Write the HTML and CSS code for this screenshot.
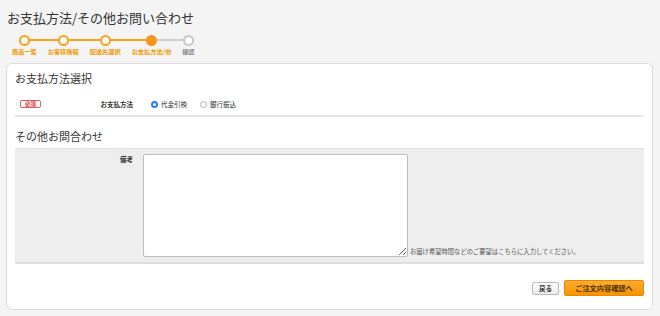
FILE: index.html
```html
<!DOCTYPE html>
<html lang="ja">
<head>
    <meta charset="UTF-8">
    <title>お支払方法/その他お問い合わせ</title>
    <link rel="stylesheet" href="styles.css">
</head>
<body>
    <div class="page">
        <h1 class="page-title">お支払方法/その他お問い合わせ</h1>

        <!-- order flow -->
        <ol class="steps">
            <li class="track"></li>
            <li class="step done"><span class="dot"></span><span class="step-name">商品一覧</span></li>
            <li class="step done"><span class="dot"></span><span class="step-name">お客様情報</span></li>
            <li class="step done"><span class="dot"></span><span class="step-name">配送先選択</span></li>
            <li class="step current"><span class="dot"></span><span class="step-name">お支払方法/他</span></li>
            <li class="step"><span class="dot"></span><span class="step-name">確認</span></li>
        </ol>

        <form class="panel">
            <h2 class="section-title">お支払方法選択</h2>
            <div class="form-row">
                <div class="row-label">
                    <span class="required">必須</span>
                    <span class="label-text">お支払方法</span>
                </div>
                <div class="row-value">
                    <label class="radio"><input type="radio" name="payment" checked> 代金引換</label>
                    <label class="radio"><input type="radio" name="payment"> 銀行振込</label>
                </div>
            </div>

            <h2 class="section-title second">その他お問合わせ</h2>
            <div class="form-row gray">
                <div class="row-label">
                    <span class="label-text">備考</span>
                </div>
                <div class="row-value">
                    <textarea class="note" name="note"></textarea>
                    <span class="help">お届け希望時間などのご要望はこちらに入力してください。</span>
                </div>
            </div>

            <div class="actions">
                <button type="button" class="btn-back">戻る</button>
                <button type="submit" class="btn-next">ご注文内容確認へ</button>
            </div>
        </form>
    </div>
</body>
</html>
```

FILE: styles.css
```css
body {
    margin: 0;
    background-color: #f4f4f4;
    color: #333;
    font-family: "Noto Sans CJK JP", "Noto Sans", sans-serif;
}
.page {
    padding: 0 7px 0 6px;
}
.page-title {
    margin: 0;
    padding: 8px 0 0 1px;
    font-size: 13px;
    line-height: 19px;
    font-weight: normal;
    color: #333;
}

/* steps */
.steps {
    position: relative;
    display: flex;
    gap: 11px;
    list-style: none;
    margin: 8px 0 0;
    padding: 0 0 0 6px;
}
.track {
    position: absolute;
    left: 19px;
    top: 4px;
    width: 169px;
    height: 2px;
    background: linear-gradient(to right, #f7a21b 131px, #cfcfcf 131px);
}
.step {
    position: relative;
    display: flex;
    flex-direction: column;
    align-items: center;
}
.dot {
    width: 7px;
    height: 7px;
    border: 2px solid #f7a21b;
    border-radius: 50%;
    background-color: #fff;
}
.step.current .dot {
    background-color: #f7941d;
    border-color: #f7941d;
}
.step:last-child .dot {
    border-color: #c8c8c8;
}
.step-name {
    margin-top: 2px;
    font-size: 6.2px;
    line-height: 8px;
    font-weight: bold;
    color: #f39800;
    white-space: nowrap;
}
.step:last-child .step-name {
    color: #888;
}

/* panel */
.panel {
    margin-top: 7px;
    background-color: #fff;
    border: 1px solid #dcdcdc;
    border-radius: 6px;
    padding: 0 8px;
}
.section-title {
    margin: 0;
    padding-top: 6px;
    font-size: 11px;
    line-height: 16px;
    font-weight: normal;
    color: #333;
}
.section-title.second {
    margin-top: 11px;
    padding: 0 0 4px;
    border-bottom: 1px solid #e2e2e2;
}
.form-row {
    display: flex;
    padding: 13px 0 6px;
    border-bottom: 2px solid #e6e6e6;
}
.row-label {
    display: flex;
    align-items: center;
    width: 122px;
    flex-shrink: 0;
}
.required {
    margin-left: 5px;
    padding: 0 4px;
    border: 1px solid #f0595b;
    border-radius: 2px;
    font-size: 5.5px;
    line-height: 6px;
    color: #e0393e;
    font-weight: bold;
}
.label-text {
    margin-left: auto;
    padding-right: 4px;
    font-size: 6.5px;
    line-height: 8px;
    font-weight: bold;
    color: #333;
}
.row-value {
    display: flex;
    align-items: center;
    padding-left: 6px;
}
.radio {
    display: flex;
    align-items: center;
    gap: 3px;
    margin-left: 8px;
    margin-right: 5px;
    font-size: 6.5px;
    color: #333;
}
.radio input {
    appearance: none;
    margin: 0;
    width: 7px;
    height: 7px;
    border: 1px solid #b5b5b5;
    border-radius: 50%;
    background-color: #fff;
}
.radio input:checked {
    background-color: #fff;
    border: 2px solid #2c7df3;
}

/* notes */
.form-row.gray {
    padding: 5px 0 5px;
    background-color: #eeeeee;
    border-bottom-color: #dedede;
}
.form-row.gray .row-label {
    align-items: flex-start;
}
.form-row.gray .label-text {
    padding-top: 1px;
}
.form-row.gray .row-value {
    align-items: flex-end;
}
.note {
    box-sizing: border-box;
    width: 265px;
    height: 103px;
    margin: 0;
    border: 1px solid #bdbdbd;
    border-radius: 2px;
    background-color: #fff;
}
.help {
    margin-left: 2px;
    margin-bottom: 1px;
    font-size: 6.3px;
    line-height: 8px;
    color: #555;
    white-space: nowrap;
}

/* buttons */
.actions {
    display: flex;
    justify-content: flex-end;
    align-items: center;
    gap: 5px;
    padding: 16px 0 13px;
}
.btn-back {
    height: 13px;
    padding: 0 6px;
    border: 1px solid #b9b9b9;
    border-radius: 2px;
    background: linear-gradient(#fff, #ececec);
    font-family: inherit;
    font-size: 6.5px;
    font-weight: bold;
    color: #333;
}
.btn-next {
    width: 80px;
    height: 16px;
    padding: 0;
    border: 1px solid #e58a00;
    border-radius: 2px;
    background: linear-gradient(#ffab2e, #f59300);
    font-family: inherit;
    font-size: 7.2px;
    font-weight: bold;
    color: #4a3000;
}
```
